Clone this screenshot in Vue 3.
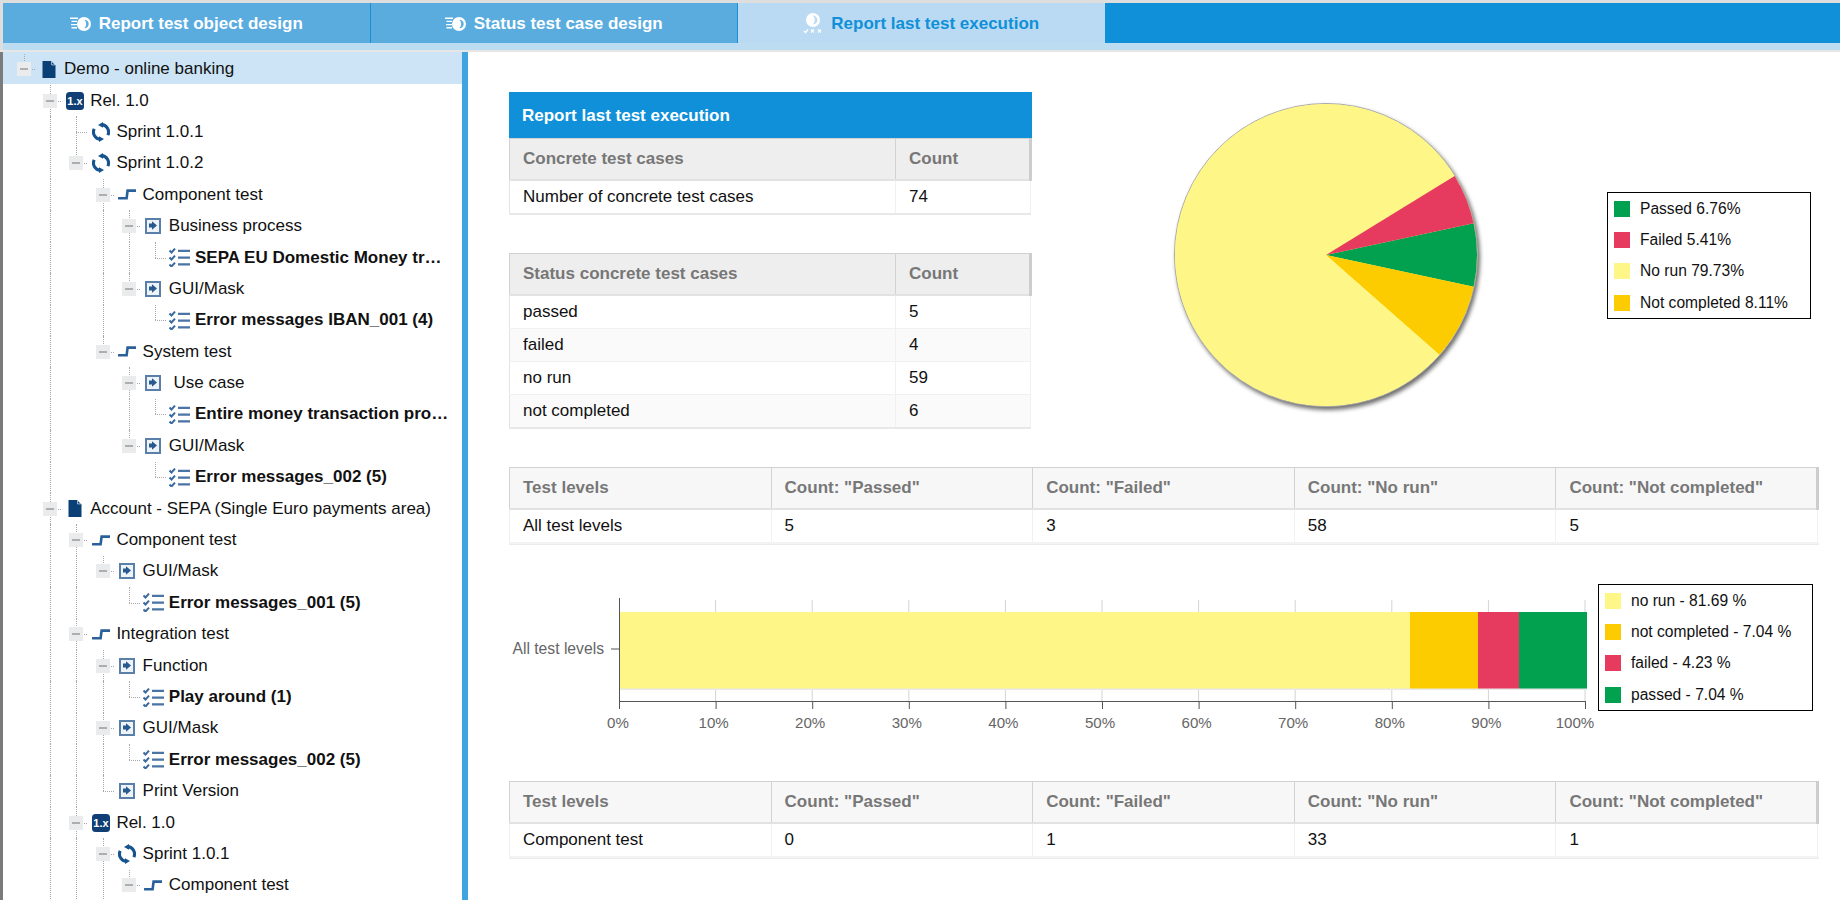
<script setup>
const tabs = [
  { label: 'Report test object design', icon: 'design' },
  { label: 'Status test case design', icon: 'design' },
  { label: 'Report last test execution', icon: 'run', active: true },
]

// level, label, icon, expanded, bold
const nodes = [
  [0, 'Demo - online banking', 'doc', true],
  [1, 'Rel. 1.0', 'rel', true],
  [2, 'Sprint 1.0.1', 'sprint', false],
  [2, 'Sprint 1.0.2', 'sprint', true],
  [3, 'Component test', 'step', true],
  [4, 'Business process', 'box', true],
  [5, 'SEPA EU Domestic Money transfer (3)', 'check', false],
  [4, 'GUI/Mask', 'box', true],
  [5, 'Error messages IBAN_001 (4)', 'check', false],
  [3, 'System test', 'step', true],
  [4, '\u00a0Use case', 'box', true],
  [5, 'Entire money transaction process (2)', 'check', false],
  [4, 'GUI/Mask', 'box', true],
  [5, 'Error messages_002 (5)', 'check', false],
  [1, 'Account - SEPA (Single Euro payments area)', 'doc', true],
  [2, 'Component test', 'step', true],
  [3, 'GUI/Mask', 'box', true],
  [4, 'Error messages_001 (5)', 'check', false],
  [2, 'Integration test', 'step', true],
  [3, 'Function', 'box', true],
  [4, 'Play around (1)', 'check', false],
  [3, 'GUI/Mask', 'box', true],
  [4, 'Error messages_002 (5)', 'check', false],
  [3, 'Print Version', 'box', false],
  [2, 'Rel. 1.0', 'rel', true],
  [3, 'Sprint 1.0.1', 'sprint', true],
  [4, 'Component test', 'step', true],
]

const STEP = 26.2
const lineX = (level) => 21 + STEP * level

// the tree runs on below the window, so these levels keep their line at the end
const cutOffLevels = [1, 2, 3]

function hasNextSibling(index, level) {
  for (let j = index + 1; j < nodes.length; j++) {
    if (nodes[j][0] === level) return true
    if (nodes[j][0] < level) return false
  }
  return cutOffLevels.includes(level)
}

const rows = nodes.map(([level, label, icon, open], index) => {
  const through = []
  for (let k = 1; k < level; k++) {
    if (hasNextSibling(index, k)) through.push(lineX(k))
  }
  return {
    level,
    label,
    icon,
    open,
    through,
    x: lineX(level),
    more: hasNextSibling(index, level),
    pad: 14 + STEP * level,
  }
})

const GREEN = '#02a150'
const RED = '#e63a5f'
const YELLOW = '#fff688'
const ORANGE = '#fccb00'

const statusTables = [
  {
    title: 'Report last test execution',
    head: ['Concrete test cases', 'Count'],
    body: [['Number of concrete test cases', '74']],
  },
  {
    head: ['Status concrete test cases', 'Count'],
    body: [['passed', '5'], ['failed', '4'], ['no run', '59'], ['not completed', '6']],
  },
]

const levelHead = ['Test levels', 'Count: "Passed"', 'Count: "Failed"', 'Count: "No run"', 'Count: "Not completed"']

// pie, clockwise from just above east
const cx = 170
const cy = 170
const radius = 151
let angle = -12.15
const slices = [[6.76, GREEN], [8.11, ORANGE], [79.73, YELLOW], [5.41, RED]].map(([pct, color]) => {
  const from = (angle * Math.PI) / 180
  angle += (pct / 100) * 360
  const to = (angle * Math.PI) / 180
  const big = pct > 50 ? 1 : 0
  const p = (a) => `${(cx + radius * Math.cos(a)).toFixed(2)} ${(cy + radius * Math.sin(a)).toFixed(2)}`
  return { color, d: `M${cx} ${cy} L${p(from)} A${radius} ${radius} 0 ${big} 1 ${p(to)} Z` }
})

const pieLegend = [
  { color: GREEN, label: 'Passed 6.76%' },
  { color: RED, label: 'Failed 5.41%' },
  { color: YELLOW, label: 'No run 79.73%' },
  { color: ORANGE, label: 'Not completed 8.11%' },
]

const barLegend = [
  { color: YELLOW, label: 'no run - 81.69 %' },
  { color: ORANGE, label: 'not completed - 7.04 %' },
  { color: RED, label: 'failed - 4.23 %' },
  { color: GREEN, label: 'passed - 7.04 %' },
]

// chart coordinates are relative to the svg, whose origin is 509,585 on the page
const axisX = 110
const tickGap = 96.6
const ticks = Array.from({ length: 11 }, (_, i) => ({
  x: axisX + i * tickGap,
  // the chart pulls its outer labels inwards
  labelX: axisX + i * tickGap + (i === 0 ? -1 : i === 10 ? -10 : -2),
  label: `${i * 10}%`,
}))
const barSegments = [
  { x: 110, w: 791, color: YELLOW },
  { x: 901, w: 68, color: ORANGE },
  { x: 969, w: 41, color: RED },
  { x: 1010, w: 68, color: GREEN },
]
</script>

<template>
  <div class="app">
    <header class="tabbar">
      <div class="tabs">
        <div v-for="tab in tabs" :key="tab.label" class="tab" :class="{ active: tab.active }">
          <svg v-if="tab.icon === 'design'" class="tab-icon" width="21" height="14" viewBox="0 0 21 14">
            <path d="M0 1.2H8M1.5 4.4H7M1 7.6H7M1.5 10.8H7" stroke="#fff" stroke-width="1.4" fill="none" />
            <circle cx="14" cy="7" r="7" fill="#fff" />
            <path d="M14.5 2.8a4.2 4.2 0 0 1 0 8.4a6 6 0 0 0 0-8.4z" fill="#5aacdf" />
          </svg>
          <svg v-else class="tab-icon" width="20" height="21" viewBox="0 0 20 21">
            <circle cx="10" cy="7" r="7" fill="#fff" />
            <path d="M10 2.6a4.4 4.4 0 0 1 0 8.8a6.4 6.4 0 0 0 0-8.8z" fill="#b9daf2" />
            <path d="M1 18l1.5 1.5L5 16.5M8 16.5l3 3M11 16.5l-3 3M15 16.5l3 3M18 16.5l-3 3" stroke="#fff" stroke-width="1.2" fill="none" />
          </svg>
          <span>{{ tab.label }}</span>
        </div>
        <div class="tab-rest"></div>
      </div>
      <div class="tab-strip"></div>
    </header>

    <div class="content">
      <aside class="sidebar">
        <div
          v-for="(row, index) in rows"
          :key="index"
          class="row"
          :class="{ selected: index === 0 }"
          :style="{ paddingLeft: row.pad + 'px' }"
        >
          <i v-for="x in row.through" :key="x" class="guide full" :style="{ left: x + 'px' }"></i>
          <i class="guide" :class="row.more ? 'full' : 'half'" :style="{ left: row.x + 'px' }"></i>
          <i class="elbow" :style="{ left: row.x + 'px' }"></i>

          <span class="toggle" :class="{ open: row.open }"></span>
          <span class="node-icon">
            <svg v-if="row.icon === 'doc'" width="14" height="17" viewBox="0 0 14 17">
              <path d="M0.5 0H9L13.5 4.5V17H0.5Z" fill="#0b4077" />
              <path d="M9.6 0.4V3.9H13.1" stroke="#cfdbe6" stroke-width="0.8" fill="none" />
            </svg>
            <svg v-else-if="row.icon === 'rel'" width="18" height="18" viewBox="0 0 18 18">
              <rect width="18" height="18" rx="3.5" fill="#0f3f75" />
              <text x="9" y="13" class="rel-text">1.x</text>
            </svg>
            <svg v-else-if="row.icon === 'sprint'" width="18" height="20" viewBox="0 0 18 20">
              <path d="M9.5 2.6A7.4 7.4 0 0 1 15.8 13.2M8.5 17.4A7.4 7.4 0 0 1 2.2 6.8" stroke="#17538f" stroke-width="3.1" fill="none" />
              <path d="M11 0L6 2.9L11 5.8ZM7 20L12 17.1L7 14.2Z" fill="#17538f" />
            </svg>
            <svg v-else-if="row.icon === 'step'" width="18" height="11" viewBox="0 0 18 11">
              <path d="M1 9.3H8.6L9.6 1.6H18" stroke="#2a6099" stroke-width="2.6" stroke-linecap="round" fill="none" />
            </svg>
            <svg v-else-if="row.icon === 'box'" width="16" height="16" viewBox="0 0 16 16">
              <rect x="1" y="1" width="14" height="14" fill="#eef3f8" stroke="#5a80aa" stroke-width="2" />
              <path d="M4 5.5H7V3.2L12 7.5L7 11.8V9.5H4Z" fill="#265a90" />
            </svg>
            <svg v-else width="21" height="19" viewBox="0 0 21 19">
              <path d="M0.5 2.5l2 2L6 0.6M0.5 9.5l2 2L6 7.6M0.5 16.5l2 2L6 14.6" stroke="#3a6a9f" stroke-width="2" fill="none" />
              <path d="M9 2.8H21M9 9.6H21M9 16.4H21" stroke="#4a74a3" stroke-width="2.3" fill="none" />
            </svg>
          </span>
          <span class="label" :class="{ bold: row.icon === 'check' }">{{ row.label }}</span>
        </div>
      </aside>

      <main class="main">
        <section class="top">
          <div class="status-tables">
            <div v-for="table in statusTables" :key="table.head[0]" class="status-block">
              <div v-if="table.title" class="table-title">{{ table.title }}</div>
              <table class="data status">
                <colgroup><col class="wide" /><col /></colgroup>
                <thead>
                  <tr><th v-for="h in table.head" :key="h">{{ h }}</th></tr>
                </thead>
                <tbody>
                  <tr v-for="r in table.body" :key="r[0]">
                    <td v-for="c in r" :key="c">{{ c }}</td>
                  </tr>
                </tbody>
              </table>
            </div>
          </div>

          <svg class="pie" width="340" height="340" viewBox="0 0 340 340">
            <circle :cx="cx" :cy="cy" :r="radius + 0.5" fill="#fff688" stroke="#aaa" stroke-width="1" />
            <path v-for="s in slices" :key="s.color" :d="s.d" :fill="s.color" />
          </svg>

          <div class="legend pie-legend">
            <div v-for="item in pieLegend" :key="item.label" class="legend-item">
              <span class="swatch" :style="{ background: item.color }"></span>{{ item.label }}
            </div>
          </div>
        </section>

        <div class="level-table">
          <table class="data levels">
            <thead>
              <tr><th v-for="h in levelHead" :key="h">{{ h }}</th></tr>
            </thead>
            <tbody>
              <tr>
                <td>All test levels</td><td>5</td><td>3</td><td>58</td><td>5</td>
              </tr>
            </tbody>
          </table>
        </div>

        <section class="chart-row">
          <svg class="bar-chart" width="1085" height="150" viewBox="0 0 1085 150">
            <line v-for="t in ticks.slice(1)" :key="t.label" :x1="t.x" :x2="t.x" y1="15" y2="116" stroke="#d4d4d4" />
            <rect x="110" y="29" width="968" height="76" fill="#e9e9e9" />
            <rect v-for="b in barSegments" :key="b.x" :x="b.x" y="27" :width="b.w" height="76.5" :fill="b.color" />
            <path d="M110.5 13V116.5H1076.5M102 64H110" stroke="#555" fill="none" />
            <line v-for="t in ticks" :key="'m' + t.label" :x1="t.x + 0.5" :x2="t.x + 0.5" y1="116" y2="124" stroke="#555" />
            <text v-for="t in ticks" :key="'t' + t.label" :x="t.labelX" y="143" class="tick">{{ t.label }}</text>
            <text x="95" y="68.5" class="cat">All test levels</text>
          </svg>
          <div class="legend bar-legend">
            <div v-for="item in barLegend" :key="item.label" class="legend-item">
              <span class="swatch" :style="{ background: item.color }"></span>{{ item.label }}
            </div>
          </div>
        </section>

        <div class="level-table">
          <table class="data levels">
            <thead>
              <tr><th v-for="h in levelHead" :key="h">{{ h }}</th></tr>
            </thead>
            <tbody>
              <tr>
                <td>Component test</td><td>0</td><td>1</td><td>33</td><td>1</td>
              </tr>
            </tbody>
          </table>
        </div>
      </main>
    </div>
  </div>
</template>

<style>
html, body {
  margin: 0;
  background: #fff;
  overflow: hidden;
}
</style>

<style scoped>
.app {
  width: 1840px;
  height: 900px;
  overflow: hidden;
  display: flex;
  flex-direction: column;
  font-family: "Liberation Sans", Arial, sans-serif;
  font-size: 17px;
  color: #111;
}
.tabbar {
  flex: none;
  padding-top: 3px;
  background: #dedede;
  border-bottom: 2px solid #e6e6e6;
}
.tabs {
  display: flex;
  height: 40px;
  padding-left: 3px;
}
.tab {
  width: 366.5px;
  padding-top: 1px;
  display: flex;
  align-items: center;
  justify-content: center;
  gap: 8px;
  background: #5aacdf;
  border-right: 1px solid #1a8fd6;
  color: #fff;
  font-weight: 700;
  box-sizing: content-box;
}
.tab.active {
  background: #b9daf2;
  color: #0f90d8;
  border-right: none;
  border-radius: 3px 3px 0 0;
}
.tab-icon {
  flex: none;
}
.tab-rest {
  flex: 1;
  background: #0f90d8;
}
.tab-strip {
  height: 7px;
  background: #bcdcf2;
  margin-left: 3px;
}

.content {
  flex: 1;
  min-height: 0;
  display: flex;
  border-left: 3px solid #7b7b7b;
}
.sidebar {
  width: 459px;
  flex: none;
  padding-top: 1.5px;
  box-sizing: border-box;
  overflow: hidden;
  position: relative;
}
.row {
  position: relative;
  height: 31.4px;
  display: flex;
  align-items: center;
  padding-right: 13px;
  box-sizing: border-box;
}
.row.selected {
  background: linear-gradient(#cce4f5 0 30px, transparent 0);
  box-shadow: 0 -2.5px 0 #cce4f5;
}
.guide {
  position: absolute;
  top: 0;
  border-left: 1px dotted #a8a8a8;
}
.guide.half {
  height: 50%;
}
.guide.full {
  height: 100%;
}
.elbow {
  position: absolute;
  top: 50%;
  width: 11px;
  border-top: 1px dotted #a8a8a8;
}
.toggle {
  position: relative;
  flex: none;
  width: 14px;
  height: 14px;
}
.toggle.open {
  background: #e9ebec;
}
.toggle.open::after {
  content: "";
  position: absolute;
  left: 3px;
  right: 3px;
  top: 6px;
  height: 2px;
  background: #aeaeae;
}
.node-icon {
  position: relative;
  flex: none;
  width: 22px;
  margin: 0 4.5px 0 6.5px;
  display: flex;
  justify-content: center;
  align-items: center;
}
.rel-text {
  fill: #fff;
  font-size: 11px;
  font-weight: 700;
  text-anchor: middle;
  font-family: "Liberation Sans", sans-serif;
}
.label {
  position: relative;
  flex: 1;
  min-width: 0;
  white-space: nowrap;
  overflow: hidden;
  text-overflow: ellipsis;
}
.label.bold {
  font-weight: 700;
}

.main {
  flex: 1;
  min-width: 0;
  box-sizing: border-box;
  border-left: 6px solid #3fa4e0;
  padding: 40px 21px 0 41px;
}
.top {
  display: flex;
  align-items: flex-start;
  height: 375px;
}
.status-tables {
  flex: none;
  width: 523px;
}
.status-block + .status-block {
  margin-top: 38px;
}
.table-title {
  height: 46px;
  line-height: 48px;
  padding-left: 13px;
  background: #0f90d8;
  color: #fff;
  font-weight: 700;
}
.data {
  width: 100%;
  border-collapse: collapse;
  table-layout: fixed;
}
.data th {
  height: 40px;
  padding: 0 13px;
  text-align: left;
  font-weight: 700;
  color: #777;
  background: #eee;
  border: 1.5px solid #d2d2d2;
  border-bottom: 2px solid #e2e2e2;
}
.data th:last-child {
  border-right: 3px solid #cdcdcd;
}
.data td {
  height: 32px;
  padding: 0 13px;
  color: #111;
  border: 1px solid #f1f1f1;
}
.data tbody tr:nth-child(even) td {
  background: #fafafa;
}
.status {
  border-bottom: 2px solid #e8e8e8;
}
.status td:first-child {
  border-left-color: #e4e4e4;
}
.wide {
  width: 386px;
}
.pie {
  flex: none;
  margin: -7px 0 0 124px;
  filter: drop-shadow(2px 3px 2px rgba(60, 60, 60, 0.75));
}
.legend {
  flex: none;
  box-sizing: border-box;
  border: 1.5px solid #000;
  background: #fff;
  padding: 0 0 0 6px;
  color: #111;
  font-size: 15.6px;
}
.legend-item {
  height: 31.4px;
  display: flex;
  align-items: center;
}
.swatch {
  width: 16px;
  height: 16px;
  margin-right: 10px;
}
.pie-legend {
  width: 204px;
  height: 127px;
  margin: 100px 0 0 111px;
}
.level-table {
  box-sizing: border-box;
  height: 78px;
  padding-bottom: 3px;
  border-bottom: 2px solid #ececec;
}
.levels th {
  background: #f7f7f7;
}
.levels td {
  border-bottom: 2px solid #f3f3f3;
}
.chart-row {
  display: flex;
  align-items: flex-start;
  padding-top: 40px;
  height: 236px;
  box-sizing: border-box;
}
.bar-chart {
  flex: none;
  margin-right: 4px;
  overflow: visible;
}
.tick {
  fill: #666;
  font-size: 15.1px;
  text-anchor: middle;
}
.cat {
  fill: #666;
  font-size: 15.7px;
  text-anchor: end;
}
.bar-legend {
  width: 215px;
  height: 127px;
  margin-top: -1px;
}
</style>
